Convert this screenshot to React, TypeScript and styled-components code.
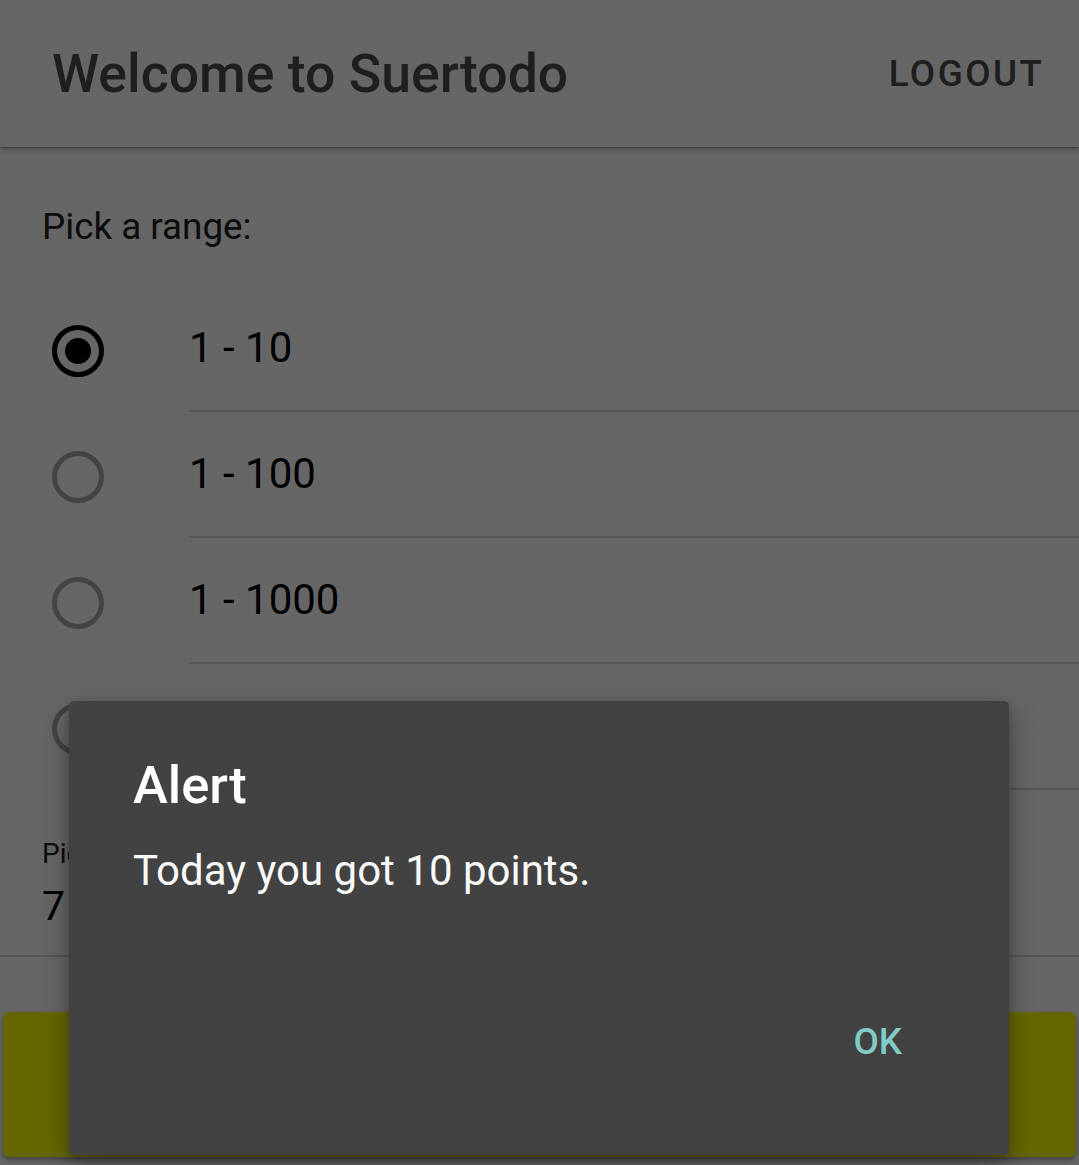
import React from "react";
import styled, { createGlobalStyle } from "styled-components";

const GlobalStyle = createGlobalStyle`
  html, body {
    margin: 0;
    padding: 0;
    background: #ffffff;
    font-family: Roboto, "Noto Sans", "Liberation Sans", sans-serif;
  }
  * { box-sizing: border-box; }
`;

const Page = styled.div`
  position: relative;
  width: 1079px;
  height: 1165px;
  overflow: hidden;
  background: #ffffff;
  display: flex;
  flex-direction: column;
`;

const AppBar = styled.header`
  height: 147px;
  flex: 0 0 147px;
  display: flex;
  align-items: center;
  justify-content: space-between;
  padding: 0 37px 0 52px;
  background: #ffffff;
  box-shadow: 0 2px 6px rgba(0, 0, 0, 0.28), 0 1px 1px rgba(0, 0, 0, 0.2);
  position: relative;
  z-index: 1;
`;

const Title = styled.h1`
  margin: 0;
  font-size: 53.6px;
  line-height: 63px;
  font-weight: 500;
  color: #4e4e4e;
`;

const ActionButton = styled.button`
  border: none;
  background: transparent;
  padding: 0;
  font-family: inherit;
  font-size: 36.75px;
  line-height: 44px;
  font-weight: 500;
  letter-spacing: 2.5px;
  margin-right: -2.5px;
  color: #4e4e4e;
`;

const Content = styled.main`
  display: flex;
  flex-direction: column;
  padding-top: 58px;
`;

const SectionLabel = styled.p`
  margin: 0 0 37px 42px;
  font-size: 36.8px;
  line-height: 44.4px;
  color: #212121;
`;

const RadioGroup = styled.div`
  display: flex;
  flex-direction: column;
`;

const RadioRow = styled.label`
  display: flex;
  align-items: stretch;
  height: 126px;
`;

const RadioCell = styled.div`
  width: 189px;
  flex: 0 0 189px;
  display: flex;
  align-items: center;
  padding-left: 52px;
  padding-top: 3px;
`;

const RadioCircle = styled.span<{ $checked: boolean }>`
  width: 52px;
  height: 52px;
  border-radius: 50%;
  border: 5px solid ${(p) => (p.$checked ? "#000000" : "#aaaaaa")};
  display: flex;
  align-items: center;
  justify-content: center;
  &::after {
    content: "";
    width: 26px;
    height: 26px;
    border-radius: 50%;
    background: #000000;
    display: ${(p) => (p.$checked ? "block" : "none")};
  }
`;

const RadioText = styled.span`
  flex: 1;
  display: flex;
  align-items: center;
  border-bottom: 2px solid #d5d5d5;
  font-size: 42px;
  color: #000000;
  padding-bottom: 2px;
`;

const Field = styled.div`
  margin-top: 47px;
  padding: 0 42px 24px;
  border-bottom: 2px solid #d5d5d5;
  display: flex;
  flex-direction: column;
`;

const FieldLabel = styled.span`
  font-size: 28px;
  line-height: 33.6px;
  color: #212121;
`;

const FieldValue = styled.span`
  margin-top: 11px;
  font-size: 41px;
  line-height: 49px;
  color: #000000;
`;

const PrimaryButton = styled.button`
  margin: 55px 3px 0 3px;
  height: 145px;
  border: none;
  border-radius: 6px;
  background: #ffff00;
  box-shadow: 0 3px 5px rgba(0, 0, 0, 0.35);
`;

const Scrim = styled.div`
  position: absolute;
  inset: 0;
  background: rgba(0, 0, 0, 0.6);
  z-index: 10;
`;

const Dialog = styled.div`
  position: absolute;
  left: 69px;
  top: 701px;
  width: 940px;
  height: 454px;
  background: #424242;
  border-radius: 5px;
  box-shadow: 0 10px 30px rgba(0, 0, 0, 0.3), 0 4px 10px rgba(0, 0, 0, 0.2);
  z-index: 11;
  display: flex;
  flex-direction: column;
  padding: 53px 64px 0 64px;
`;

const DialogTitle = styled.h2`
  margin: 0;
  font-size: 52.5px;
  line-height: 63px;
  font-weight: 500;
  color: #ffffff;
`;

const DialogMessage = styled.p`
  margin: 29px 0 0 0;
  font-size: 42px;
  line-height: 50.4px;
  color: #fafafa;
`;

const DialogActions = styled.div`
  margin-top: 124px;
  display: flex;
  justify-content: flex-end;
  padding-right: 43px;
`;

const TextButton = styled.button`
  border: none;
  background: transparent;
  padding: 0;
  font-family: inherit;
  font-size: 36.75px;
  line-height: 44px;
  font-weight: 500;
  color: #80cbc4;
`;

const ranges = ["1 - 10", "1 - 100", "1 - 1000", "1 - 10000"];

export default function App() {
  return (
    <>
      <GlobalStyle />
      <Page>
        <AppBar>
          <Title>Welcome to Suertodo</Title>
          <ActionButton>LOGOUT</ActionButton>
        </AppBar>
        <Content>
          <SectionLabel>Pick a range:</SectionLabel>
          <RadioGroup>
            {ranges.map((r, i) => (
              <RadioRow key={r}>
                <RadioCell>
                  <RadioCircle $checked={i === 0} />
                </RadioCell>
                <RadioText>{r}</RadioText>
              </RadioRow>
            ))}
          </RadioGroup>
          <Field>
            <FieldLabel>Pick a number</FieldLabel>
            <FieldValue>7</FieldValue>
          </Field>
          <PrimaryButton aria-label="Play" />
        </Content>
        <Scrim />
        <Dialog role="alertdialog">
          <DialogTitle>Alert</DialogTitle>
          <DialogMessage>Today you got 10 points.</DialogMessage>
          <DialogActions>
            <TextButton>OK</TextButton>
          </DialogActions>
        </Dialog>
      </Page>
    </>
  );
}
